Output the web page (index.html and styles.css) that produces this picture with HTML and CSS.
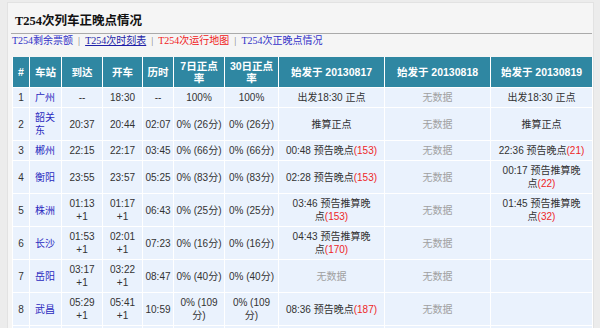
FILE: index.html
```html
<!DOCTYPE html>
<html lang="zh-CN">
<head>
  <meta charset="UTF-8" />
  <title>T254次列车正晚点情况</title>
  <link rel="stylesheet" href="styles.css">
</head>
<body>
  <div class="panel">
    <div class="title">T254次列车正晚点情况</div>
    <div class="rule"></div>
    <div class="links">
      <a href="#">T254剩余票额</a><span class="sep">|</span><a class="under" href="#">T254次时刻表</a><span class="sep">|</span><a class="hot" href="#">T254次运行地图</a><span class="sep">|</span><a href="#">T254次正晚点情况</a>
    </div>

    <table class="times">
      <colgroup>
        <col style="width: 17px">
        <col style="width: 32px">
        <col style="width: 41px">
        <col style="width: 40px">
        <col style="width: 31px">
        <col style="width: 51px">
        <col style="width: 54px">
        <col style="width: 106px">
        <col style="width: 106px">
        <col style="width: 102px">
      </colgroup>
      <tr>
        <th>#</th><th>车站</th><th>到达</th><th>开车</th><th>历时</th><th>7日正点率</th><th>30日正点率</th>
        <th>始发于 20130817</th><th>始发于 20130818</th><th>始发于 20130819</th>
      </tr>
      <tr>
        <td>1</td><td class="st"><a href="#">广州</a></td><td>--</td><td>18:30</td><td>--</td><td>100%</td><td>100%</td>
        <td>出发18:30 正点</td><td class="none">无数据</td><td>出发18:30 正点</td>
      </tr>
      <tr>
        <td>2</td><td class="st"><a href="#">韶关东</a></td><td>20:37</td><td>20:44</td><td>02:07</td><td>0% (26分)</td><td>0% (26分)</td>
        <td>推算正点</td><td class="none">无数据</td><td>推算正点</td>
      </tr>
      <tr>
        <td>3</td><td class="st"><a href="#">郴州</a></td><td>22:15</td><td>22:17</td><td>03:45</td><td>0% (66分)</td><td>0% (66分)</td>
        <td>00:48 预告晚点<span class="late">(153)</span></td><td class="none">无数据</td><td>22:36 预告晚点<span class="late">(21)</span></td>
      </tr>
      <tr>
        <td>4</td><td class="st"><a href="#">衡阳</a></td><td>23:55</td><td>23:57</td><td>05:25</td><td>0% (83分)</td><td>0% (83分)</td>
        <td>02:28 预告晚点<span class="late">(153)</span></td><td class="none">无数据</td><td>00:17 预告推算晚<span class="nw">点<span class="late">(22)</span></span></td>
      </tr>
      <tr>
        <td>5</td><td class="st"><a href="#">株洲</a></td><td>01:13<br>+1</td><td>01:17<br>+1</td><td>06:43</td><td>0% (25分)</td><td>0% (25分)</td>
        <td>03:46 预告推算晚<span class="nw">点<span class="late">(153)</span></span></td><td class="none">无数据</td><td>01:45 预告推算晚<span class="nw">点<span class="late">(32)</span></span></td>
      </tr>
      <tr>
        <td>6</td><td class="st"><a href="#">长沙</a></td><td>01:53<br>+1</td><td>02:01<br>+1</td><td>07:23</td><td>0% (16分)</td><td>0% (16分)</td>
        <td>04:43 预告推算晚<span class="nw">点<span class="late">(170)</span></span></td><td class="none">无数据</td><td></td>
      </tr>
      <tr>
        <td>7</td><td class="st"><a href="#">岳阳</a></td><td>03:17<br>+1</td><td>03:22<br>+1</td><td>08:47</td><td>0% (40分)</td><td>0% (40分)</td>
        <td class="none">无数据</td><td class="none">无数据</td><td></td>
      </tr>
      <tr>
        <td>8</td><td class="st"><a href="#">武昌</a></td><td>05:29<br>+1</td><td>05:41<br>+1</td><td>10:59</td><td>0% (109分)</td><td>0% (109分)</td>
        <td>08:36 预告晚点<span class="late">(187)</span></td><td class="none">无数据</td><td></td>
      </tr>
      <tr class="more">
        <td>&nbsp;</td><td></td><td></td><td></td><td></td><td></td><td></td><td></td><td></td><td></td>
      </tr>
    </table>
  </div>
</body>
</html>
```

FILE: styles.css
```css
body {
  margin: 0;
  padding: 2px 0 0 7px;
  background: #ececec;
  font-family: "Liberation Sans", "Noto Sans CJK SC", sans-serif;
  color: #333;
  overflow: hidden;
}

.panel {
  width: 585px;
  background: #f5f5f5;
  border: 1px solid #e2e2e2;
  padding-bottom: 40px;
}

.title {
  padding: 10px 0 0 7px;
  font: bold 12.5px/16px "Liberation Serif", "Noto Sans CJK SC", serif;
  color: #111;
}

.rule {
  margin: 4px 1px 0 3px;
  border-top: 1px solid #aaa;
}

.links {
  padding-left: 4px;
  font: 10px/14px "Liberation Serif", "Noto Sans CJK SC", serif;
}

.links a {
  color: #3232c8;
  text-decoration: none;
}

.links a.under {
  color: #1f1fa8;
  text-decoration: underline;
}

.links a.hot {
  color: #f02020;
}

.sep {
  color: #777;
  margin: 0 5px;
}

.times {
  margin: 9px 0 0 4px;
  width: 580px;
  table-layout: fixed;
  border-collapse: collapse;
  font-size: 10px;
  line-height: 13px;
}

.times th {
  background: #2f87a2;
  color: #fff;
  font-size: 10.5px;
  line-height: 12px;
  font-weight: bold;
  padding: 3px 2px;
  border: 1px solid #fff;
  border-top: none;
}

.times td {
  background: #eaf2fd;
  padding: 3px 2px;
  border: 1px solid #fff;
  text-align: center;
  vertical-align: middle;
}

.times td.st {
  text-align: left;
  padding: 3px 5px;
}

.st a {
  color: #2b2bbf;
  text-decoration: none;
}

.none {
  color: #a0a0a0;
}

.late {
  color: #ee2626;
}

.nw {
  white-space: nowrap;
}

.more td {
  height: 26px;
}
```
